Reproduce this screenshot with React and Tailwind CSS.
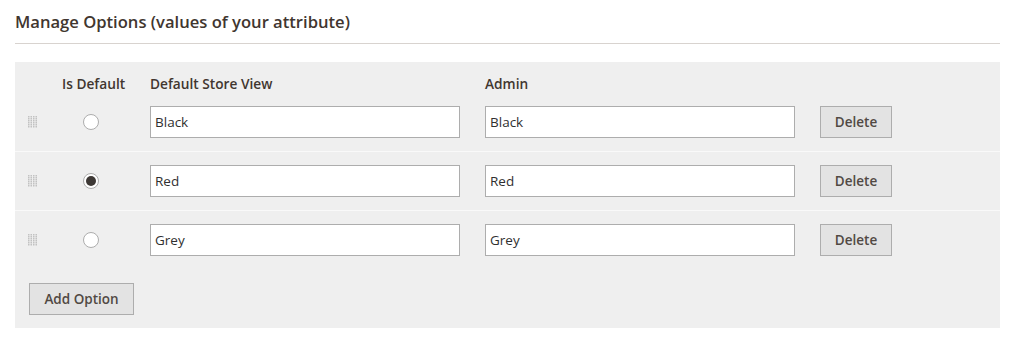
const options = [
  { id: 1, store: 'Black', admin: 'Black', isDefault: false },
  { id: 2, store: 'Red', admin: 'Red', isDefault: true },
  { id: 3, store: 'Grey', admin: 'Grey', isDefault: false },
];

const DragHandle = () => (
  <svg width="10" height="12" viewBox="0 0 10 12">
    {[0, 2.5, 5, 7.5].map(x =>
      [0, 2, 4, 6, 8, 10].map(y => (
        <rect key={`${x}-${y}`} x={x} y={y} width="1.5" height="1.5" fill="#c2c2c2" />
      ))
    )}
  </svg>
);

const Radio = ({ checked }) => (
  <span className="flex items-center justify-center w-[16px] h-[16px] rounded-full bg-white border border-[#adadad]">
    {checked && <span className="block w-[10px] h-[10px] rounded-full bg-[#3d3835]" />}
  </span>
);

const App = () => {
  return (
    <div className="w-full h-[343px] bg-white text-[#41362f]" style={{ fontFamily: '"Open Sans", "Liberation Sans", sans-serif' }}>
      <div className="pl-[15px] pr-[24px]">
        {/* Section title */}
        <div className="pt-[10px] pb-[10px] border-b border-[#d8d3cf]">
          <h2 className="text-[16.6px] leading-[23px] font-semibold">Manage Options (values of your attribute)</h2>
        </div>

        {/* Options panel */}
        <div className="mt-[18px] bg-[#efefef]">
          <div className="grid grid-cols-[35px_100px_335px_335px_1fr] pt-[13px] text-[13.7px] leading-[18px] font-semibold">
            <div />
            <div className="pl-[12px]">Is Default</div>
            <div>Default Store View</div>
            <div>Admin</div>
            <div />
          </div>

          {options.map((opt, i) => (
            <div
              key={opt.id}
              className={`grid grid-cols-[35px_100px_335px_335px_1fr] items-center pt-[13px] pb-[13px] ${i < options.length - 1 ? 'border-b border-[#f9f9f9]' : 'border-b border-[#efefef]'}`}
            >
              <div className="pl-[13px] flex items-center">
                <DragHandle />
              </div>
              <div className="pl-[33px]">
                <Radio checked={opt.isDefault} />
              </div>
              <div>
                <div className="w-[310px] h-[32px] bg-white border border-[#adadad] pl-[4px] flex items-center text-[13.5px] text-[#303030]">
                  {opt.store}
                </div>
              </div>
              <div>
                <div className="w-[310px] h-[32px] bg-white border border-[#adadad] pl-[4px] flex items-center text-[13.5px] text-[#303030]">
                  {opt.admin}
                </div>
              </div>
              <div>
                <button className="w-[72px] h-[32px] bg-[#e3e3e3] border border-[#adadad] text-[13.5px] text-[#514943] font-semibold">
                  Delete
                </button>
              </div>
            </div>
          ))}

          <div className="pt-[13px] pb-[13px] pl-[14px]">
            <button className="w-[105px] h-[32px] bg-[#e3e3e3] border border-[#adadad] text-[13.5px] text-[#514943] font-semibold">
              Add Option
            </button>
          </div>
        </div>
      </div>
    </div>
  );
};

export default App;
